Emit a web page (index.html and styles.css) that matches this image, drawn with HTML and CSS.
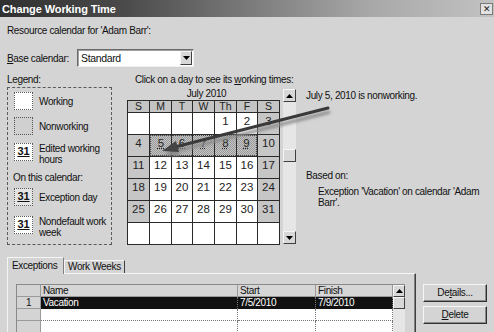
FILE: index.html
```html
<!DOCTYPE html>
<html>
<head>
<meta charset="utf-8">
<link rel="stylesheet" href="styles.css">
</head>
<body>
<div class="dialog">
  <div class="titlebar">
    <span class="title">Change Working Time</span>
    <span class="close">&#x2715;</span>
  </div>
  <div class="content">
    <div class="res-label">Resource calendar for 'Adam Barr':</div>
    <div class="base-row">
      <span class="base-lbl"><u>B</u>ase calendar:</span>
      <div class="select">
        <span class="select-text">Standard</span>
        <span class="select-btn"><svg width="7" height="4" viewBox="0 0 7 4"><polygon points="0,0 7,0 3.5,4" fill="#000"/></svg></span>
      </div>
    </div>

    <div class="main">
      <div class="legend-col">
        <div class="lbl">Legend:</div>
        <div class="legend">
          <div class="item it-1"><span class="sw sw-work"></span><span class="it-text">Working</span></div>
          <div class="item it-2"><span class="sw sw-non"></span><span class="it-text">Nonworking</span></div>
          <div class="item it-3"><span class="sw sw-num">31</span><span class="it-text two">Edited working hours</span></div>
          <div class="on-cal">On this calendar:</div>
          <div class="item it-4"><span class="sw sw-num sw-exc">31</span><span class="it-text">Exception day</span></div>
          <div class="item it-5"><span class="sw sw-num">31</span><span class="it-text two">Nondefault work week</span></div>
        </div>
      </div>

      <div class="cal-col">
        <div class="lbl cal-lbl">Click on a day to see its <u>w</u>orking times:</div>
        <div class="cal-wrap">
          <div class="cal">
            <div class="cal-month">July 2010</div>
            <div class="cal-grid">
              <div class="c hd">S</div><div class="c hd">M</div><div class="c hd">T</div><div class="c hd">W</div><div class="c hd">Th</div><div class="c hd">F</div><div class="c hd">S</div>
              <div class="c"></div><div class="c"></div><div class="c"></div><div class="c"></div><div class="c">1</div><div class="c">2</div><div class="c we">3</div>
              <div class="c we">4</div><div class="c ex ex-first"><span>5</span></div><div class="c ex"><span>6</span></div><div class="c ex"><span>7</span></div><div class="c ex"><span>8</span></div><div class="c ex ex-last"><span>9</span></div><div class="c we">10</div>
              <div class="c we">11</div><div class="c">12</div><div class="c">13</div><div class="c">14</div><div class="c">15</div><div class="c">16</div><div class="c we">17</div>
              <div class="c we">18</div><div class="c">19</div><div class="c">20</div><div class="c">21</div><div class="c">22</div><div class="c">23</div><div class="c we">24</div>
              <div class="c we">25</div><div class="c">26</div><div class="c">27</div><div class="c">28</div><div class="c">29</div><div class="c">30</div><div class="c we">31</div>
              <div class="c"></div><div class="c"></div><div class="c"></div><div class="c"></div><div class="c"></div><div class="c"></div><div class="c"></div>
            </div>
          </div>
          <div class="vscroll">
            <div class="sbtn"><svg width="7" height="4" viewBox="0 0 7 4"><polygon points="0,4 7,4 3.5,0" fill="#000"/></svg></div>
            <div class="strack strack-a"></div>
            <div class="sthumb"></div>
            <div class="strack strack-b"></div>
            <div class="sbtn"><svg width="7" height="4" viewBox="0 0 7 4"><polygon points="0,0 7,0 3.5,4" fill="#000"/></svg></div>
          </div>
        </div>
      </div>

      <div class="info-col">
        <div class="info-status">July 5, 2010 is nonworking.</div>
        <div class="info-based">Based on:</div>
        <div class="info-detail">Exception 'Vacation' on calendar 'Adam Barr'.</div>
      </div>
    </div>

    <div class="bottom">
      <div class="tabs-area">
        <div class="tabs">
          <div class="tab active">Exceptions</div>
          <div class="tab">Work Weeks</div>
        </div>
        <div class="panel">
          <div class="table">
            <div class="tr thead">
              <div class="td num"></div>
              <div class="td name">Name</div>
              <div class="td start">Start</div>
              <div class="td finish">Finish</div>
              <div class="td sb sb-up"><svg width="7" height="4" viewBox="0 0 7 4"><polygon points="0,4 7,4 3.5,0" fill="#000"/></svg></div>
            </div>
            <div class="tr sel">
              <div class="td num">1</div>
              <div class="td name">Vacation</div>
              <div class="td start">7/5/2010</div>
              <div class="td finish">7/9/2010</div>
              <div class="td sb sb-thumb"></div>
            </div>
            <div class="tr empty">
              <div class="td num"></div>
              <div class="td name"></div>
              <div class="td start"></div>
              <div class="td finish"></div>
              <div class="td sb sb-track"></div>
            </div>
            <div class="tr empty">
              <div class="td num"></div>
              <div class="td name"></div>
              <div class="td start"></div>
              <div class="td finish"></div>
              <div class="td sb sb-track"></div>
            </div>
          </div>
        </div>
      </div>
      <div class="buttons">
        <div class="btn">De<u>t</u>ails...</div>
        <div class="btn"><u>D</u>elete</div>
      </div>
    </div>
  </div>

  <svg class="arrow" width="494" height="332" viewBox="0 0 494 332">
    <defs>
      <filter id="blur" x="-10%" y="-50%" width="120%" height="200%"><feGaussianBlur stdDeviation="1.6"/></filter>
    </defs>
    <line x1="176" y1="151" x2="330" y2="112" stroke="#8a8a8a" stroke-width="3" filter="url(#blur)"/>
    <polygon points="164,155 177,146 180,156" fill="#8a8a8a" filter="url(#blur)"/>
    <line x1="175" y1="147" x2="328" y2="108" stroke="#3a3a3a" stroke-width="3" stroke-linecap="round"/>
    <polygon points="162,151 176,141 179,152" fill="#444"/>
  </svg>
</div>
</body>
</html>
```
FILE: styles.css
```css
* { box-sizing: border-box; }
html, body { margin: 0; padding: 0; }
body {
  background: #d4d4d4;
  font-family: "Liberation Sans", Arial, sans-serif;
  font-size: 10px;
  letter-spacing: -0.35px;
  color: #111;
}
.dialog {
  position: relative;
  width: 494px;
  height: 332px;
  overflow: hidden;
  background: #d4d4d4;
}
.titlebar {
  height: 17px;
  display: flex;
  align-items: center;
  justify-content: space-between;
  padding: 0 1px 0 2px;
  background: linear-gradient(to right, #303030 0%, #4a4a4a 25%, #7a7a7a 50%, #a8a8a8 75%, #c2c2c2 100%);
}
.title {
  color: #fff;
  font-weight: bold;
  font-size: 11px;
  letter-spacing: -0.1px;
}
.close {
  width: 13px;
  height: 12px;
  background: #e2e2e2;
  border: 1px solid #7a7a7a;
  font-size: 9px;
  line-height: 10px;
  text-align: center;
  color: #222;
  letter-spacing: 0;
}
.content { padding: 0 7px; }
.res-label {
  margin-top: 7px;
  line-height: 13px;
}
.base-row {
  margin-top: 12px;
  display: grid;
  grid-template-columns: 70px 117px;
  align-items: center;
}
.base-lbl { white-space: nowrap; }
.select {
  height: 18px;
  background: #fff;
  border: 1px solid;
  border-color: #6a6a6a #f0f0f0 #f0f0f0 #6a6a6a;
  box-shadow: inset 1px 1px #a0a0a0;
  display: flex;
  align-items: center;
  justify-content: space-between;
  padding: 1px 1px 1px 3px;
}
.select-text { font-size: 10.5px; }
.select-btn {
  width: 12px;
  height: 14px;
  background: #d8d8d8;
  border: 1px solid;
  border-color: #f4f4f4 #404040 #404040 #f4f4f4;
  display: flex;
  align-items: center;
  justify-content: center;
}
.main {
  margin-top: 6px;
  display: grid;
  grid-template-columns: 105px 169px auto;
  column-gap: 15px;
}
.main > .info-col { margin-left: -5px; }
.lbl { line-height: 13px; height: 13px; }
.legend {
  margin-top: 1px;
  height: 158px;
  border: 1px dashed #5a5a5a;
  padding: 4px 0 0 6px;
}
.item {
  display: flex;
  align-items: flex-start;
  gap: 6px;
}
.sw {
  flex: none;
  width: 19px;
  height: 18px;
  border: 1px dotted #5a5a5a;
  background: #fff;
  font-weight: bold;
  font-size: 11px;
  letter-spacing: 0;
  text-decoration: underline;
  text-align: center;
  line-height: 15px;
}
.sw-non { background: #d0d0d0; }
.sw-exc { background: #e4e4e4; }
.it-text { line-height: 11px; padding-top: 4px; }
.it-text.two { padding-top: 0; width: 70px; }
.it-2 { margin-top: 7px; }
.it-3 { margin-top: 8px; }
.on-cal { margin-top: 6px; line-height: 13px; margin-left: -1px; }
.it-4 { margin-top: 4px; }
.it-5 { margin-top: 10px; }

.cal-lbl { padding-left: 8px; white-space: nowrap; }
.cal-wrap {
  margin-top: 2px;
  display: flex;
  gap: 3px;
}
.cal { width: 153px; }
.cal-month {
  height: 12px;
  line-height: 12px;
  text-align: center;
  padding-left: 6px;
}
.cal-grid {
  display: grid;
  grid-template-columns: 21px 21px 20px 21px 21px 20px 21px;
  grid-template-rows: 11px repeat(6, 21px);
  gap: 1px;
  padding: 1px;
  background: #2a2a2a;
}
.c {
  background: #fff;
  font-size: 11.5px;
  letter-spacing: 0;
  text-align: center;
  line-height: 17px;
  color: #222;
}
.c.hd {
  background: #c4c4c4;
  line-height: 11px;
  font-size: 10.5px;
}
.c.we { background: #c6c6c6; }
.c.ex {
  background: repeating-conic-gradient(#9a9a9a 0 25%, #c4c4c4 0 50%) 0 0 / 2px 2px;
  border-top: 1px dotted #444;
  border-bottom: 1px dotted #444;
  line-height: 15px;
}
.c.ex span { text-decoration: underline; text-decoration-style: dotted; }
.c.ex-first { border-left: 1px dotted #444; }
.c.ex-last { border-right: 1px dotted #444; }

.vscroll {
  margin-top: 1px;
  width: 13px;
  height: 155px;
  display: flex;
  flex-direction: column;
  background: #e6e6e6;
}
.sbtn, .sthumb {
  height: 13px;
  flex: none;
  background: #d8d8d8;
  border: 1px solid;
  border-color: #f6f6f6 #404040 #404040 #f6f6f6;
  display: flex;
  align-items: center;
  justify-content: center;
}
.strack-a { height: 47px; flex: none; }
.strack-b { flex: 1; }

.info-col { padding-top: 16px; }
.info-status { line-height: 13px; }
.info-based { margin-top: 67px; line-height: 13px; }
.info-detail {
  margin-top: 4px;
  padding-left: 12px;
  line-height: 11px;
  width: 176px;
}

.bottom {
  margin-top: 12px;
  display: flex;
}
.tabs-area { width: 411px; }
.tabs {
  display: flex;
  align-items: flex-end;
  height: 16px;
}
.tab {
  height: 13px;
  line-height: 12px;
  padding: 0 3px;
  border: 1px solid;
  border-bottom: none;
  border-color: #f4f4f4 #404040 transparent #f4f4f4;
  background: #d4d4d4;
}
.tab.active {
  height: 17px;
  width: 57px;
  padding-left: 4px;
  line-height: 15px;
  position: relative;
  z-index: 1;
  margin-bottom: -1px;
  border-right-color: #808080;
}
.panel {
  height: 80px;
  border: 1px solid;
  border-color: #f4f4f4 #404040 #404040 #f4f4f4;
  box-shadow: inset -1px 0 #808080;
  padding: 10px 0 0 8px;
}
.table {
  width: 389px;
  border-top: 1px solid #8a8a8a;
  border-left: 1px solid #8a8a8a;
}
.tr {
  display: grid;
  grid-template-columns: 24px 197px 78px 77px 12px;
  height: 12px;
}
.td {
  line-height: 12px;
  padding-left: 2px;
  white-space: nowrap;
  overflow: hidden;
}
.thead .td {
  background: #d6d6d6;
  border-right: 1px solid #9a9a9a;
  border-bottom: 1px solid #9a9a9a;
  line-height: 11px;
}
.td.num {
  background: #d4d4d4;
  border-right: 1px solid #9a9a9a;
  border-bottom: 1px solid #9a9a9a;
  text-align: center;
  padding-left: 0;
}
.sel .td { background: #111; color: #fff; border-right: 1px dotted #777; }
.sel .td.num { background: #d4d4d4; color: #111; border-right: 1px solid #9a9a9a; }
.empty .td { background: #fff; border-right: 1px dotted #777; border-bottom: 1px dotted #777; }
.empty .td.num { background: #d4d4d4; border-right: 1px solid #9a9a9a; border-bottom: 1px solid #9a9a9a; }
.td.sb { padding: 0; border: none; }
.thead .td.sb-up, .sel .td.sb-thumb {
  background: #d8d8d8;
  border: 1px solid;
  border-color: #f6f6f6 #404040 #404040 #f6f6f6;
  display: flex;
  align-items: center;
  justify-content: center;
}
.empty .td.sb-track { background: #e6e6e6; border: none; }

.buttons {
  margin-left: 7px;
  margin-top: 27px;
  display: flex;
  flex-direction: column;
  gap: 4px;
}
.btn {
  width: 64px;
  height: 18px;
  line-height: 16px;
  text-align: center;
  background: #d4d4d4;
  border: 1px solid;
  border-color: #f6f6f6 #303030 #303030 #f6f6f6;
  box-shadow: inset -1px -1px #8a8a8a;
}
.arrow {
  position: absolute;
  left: 0;
  top: 0;
  pointer-events: none;
}
```
